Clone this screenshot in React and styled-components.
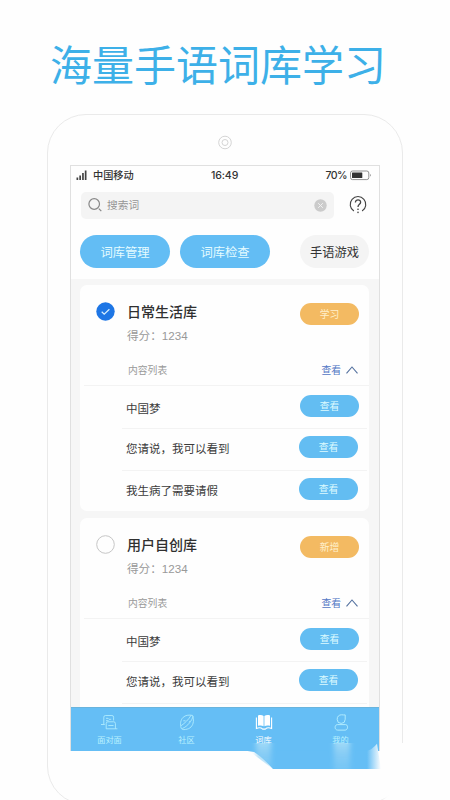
import React from "react";
import styled, { createGlobalStyle } from "styled-components";

const Global = createGlobalStyle`
  * { box-sizing: border-box; }
  body { margin: 0; background: #fefefe; }
`;

const Page = styled.main`
  position: relative;
  width: 450px;
  height: 800px;
  overflow: hidden;
  background: #fefefe;
  font-family: "Noto Sans CJK SC", "Noto Sans", sans-serif;
  color: #333;
`;

const Headline = styled.h1`
  margin: 0;
  height: 114px;
  padding: 33px 0 0 50px;
  font-size: 42px;
  line-height: 60px;
  font-weight: 400;
  color: #3db0e8;
  white-space: nowrap;
`;

const Phone = styled.section`
  width: 356px;
  height: 691px;
  margin-left: 47px;
  padding: 0 23px;
  border: 1px solid #eaeaea;
  border-radius: 39px;
`;

const Speaker = styled.div`
  height: 50px;
  padding: 20px 0 0 147px;
  svg { display: block; }
`;

const Screen = styled.div`
  width: 310px;
  height: 586px;
  display: flex;
  flex-direction: column;
  border: 1px solid #e0e0e0;
  border-bottom: 0;
  overflow: hidden;
  margin-left: -1px;
`;

const Header = styled.header`
  flex: none;
  height: 113px;
  background: #fefefe;
`;

const StatusBar = styled.div`
  display: grid;
  grid-template-columns: 17px 118px 1fr auto 20px;
  align-items: center;
  height: 18px;
  padding: 0 9px 0 5px;
  font-size: 10.2px;
  line-height: 16px;
  font-weight: 500;
  color: #333;
  svg { display: block; }
`;

const Latin = styled.span`
  font-family: Inter, "Noto Sans", sans-serif;
  font-size: 10.6px;
  line-height: 16px;
  font-weight: 500;
  letter-spacing: ${(p) => p.$spacing || "0"};
  margin: 1px 3px 0 0;
`;

const SearchRow = styled.div`
  display: flex;
  align-items: center;
  gap: 15px;
  height: 27px;
  margin: 8px 0 0 10px;
  > svg { margin-top: -3px; }
`;

const SearchBox = styled.div`
  display: flex;
  align-items: center;
  width: 253px;
  height: 27px;
  padding: 0 7px;
  border-radius: 5px;
  background: #f4f4f4;
  color: #969696;
  font-size: 10.7px;
  line-height: 16px;
  > svg:first-child { margin-top: -1px; }
  span { flex: 1; margin: -1px 0 0 4px; }
`;

const Actions = styled.div`
  display: flex;
  gap: 10px;
  margin: 16px 10px 0 9px;
`;

const ActionButton = styled.button`
  width: ${(p) => (p.$plain ? "69px" : "90px")};
  height: 33px;
  margin-left: ${(p) => (p.$plain ? "auto" : "0")};
  padding: 0;
  border: 0;
  border-radius: 17px;
  background: ${(p) => (p.$plain ? "#f4f4f4" : "#63bdf4")};
  color: ${(p) => (p.$plain ? "#333" : "#e4fbff")};
  font: 400 12.3px/30px "Noto Sans CJK SC", sans-serif;
`;

const Content = styled.div`
  flex: 1;
  min-height: 0;
  overflow: hidden;
  padding: 6px 10px 0 9px;
  background: #f6f6f6;
`;

const Card = styled.article`
  height: 226px;
  margin-bottom: 7px;
  border-radius: 7px;
  background: #fefefe;
`;

const CardTop = styled.div`
  display: grid;
  grid-template-columns: 47px 1fr 59px;
  height: 69px;
  padding: 17px 10px 0 16px;
  > svg { display: block; }
  > button { margin-top: 1px; }
`;

const CardTitle = styled.h2`
  margin: -2px 0 0 -16px;
  font-size: 14px;
  line-height: 22px;
  font-weight: 500;
  color: #303030;
`;

const Score = styled.p`
  margin: 5px 0 0 -16px;
  font-family: "Liberation Sans", "Noto Sans CJK SC", sans-serif;
  font-size: 11.6px;
  line-height: 18px;
  color: #999;
`;

const Pill = styled.button`
  flex: none;
  width: 59px;
  height: 22px;
  padding: 0;
  border: 0;
  border-radius: 11px;
  background: ${(p) => (p.$warm ? "#f3ba62" : "#63bdf2")};
  color: ${(p) => (p.$warm ? "#fff0cc" : "#dcfaff")};
  font: 400 9.8px/20px "Noto Sans CJK SC", sans-serif;
`;

const ListHeading = styled.div`
  display: flex;
  align-items: center;
  justify-content: space-between;
  height: 32px;
  margin-left: 4px;
  padding: 0 11px 0 44px;
  border-bottom: 1px solid #f3f3f3;
  font-size: 9.8px;
  line-height: 16px;
  color: #999;
`;

const Toggle = styled.span`
  display: flex;
  align-items: center;
  gap: 5px;
  color: #5276c4;
`;

const WordRow = styled.div`
  display: flex;
  justify-content: space-between;
  align-items: flex-start;
  height: ${(p) => (p.$first ? "43px" : p.$last ? "40px" : "42px")};
  margin: 0 2px 0 42px;
  padding: ${(p) => (p.$first ? "9px 8px 0 4px" : "7px 9px 0 4px")};
  border-bottom: ${(p) => (p.$last ? "0" : "1px solid #f3f3f3")};
  font-size: 11.5px;
  line-height: 18px;
  color: #3b3b3b;
  span { margin-top: ${(p) => (p.$first ? "4px" : "3px")}; }
`;

const NavBar = styled.nav`
  flex: none;
  display: grid;
  grid-template-columns: repeat(4, 1fr);
  height: 44px;
  border-top: 1px solid #69b4dd;
  background: #65bef5;
`;

const NavItem = styled.div`
  display: flex;
  flex-direction: column;
  align-items: center;
  padding-top: 6px;
  color: ${(p) => (p.$active ? "#fff" : "#b9f1ff")};
  font-size: 8.2px;
  line-height: 12px;
  span { margin-top: 2px; }
`;

const Smear = styled.svg`
  position: absolute;
  left: 230px;
  top: 735px;
`;

const SignalIcon = () => (
  <svg width="12" height="11" viewBox="0 0 12 11" fill="#444">
    <rect x="0.5" y="7.5" width="1.7" height="2.5" /><rect x="3.3" y="5.5" width="1.7" height="4.5" />
    <rect x="6.1" y="3" width="1.7" height="7" /><rect x="8.8" y="0.5" width="1.7" height="9.5" />
  </svg>
);
const BatteryIcon = () => (
  <svg width="22" height="11" viewBox="0 0 22 11" fill="none">
    <rect x="0.5" y="1" width="18.3" height="8.6" rx="2" stroke="#777" strokeWidth=".8" />
    <rect x="2" y="2.5" width="10.3" height="5.6" rx=".5" fill="#333" />
    <path d="M20 4v2.6c.8-.3.8-2.3 0-2.6z" fill="#666" />
  </svg>
);
const SearchIcon = () => (
  <svg width="15" height="16" viewBox="0 0 15 16" fill="none" stroke="#888" strokeWidth="1.2">
    <circle cx="6.2" cy="7" r="5.3" /><path d="m10.8 11.7 2.5 2.5" />
  </svg>
);
const ClearIcon = () => (
  <svg width="13" height="13" viewBox="0 0 13 13">
    <circle cx="6.5" cy="6.5" r="6.2" fill="#cbcbcb" /><path d="m4.2 4.2 4.6 4.6m0-4.6L4.2 8.8" stroke="#f1f1f1" />
  </svg>
);
const HelpIcon = () => (
  <svg width="18" height="19" viewBox="0 0 18 19" fill="none" stroke="#444" strokeWidth="1.1">
    <path d="M4.9 16a7.8 7.8 0 1 1 8.2 0" />
    <path d="M6.4 7.5c0-3.6 5.4-3.4 5.2-.1C11.5 9.3 9 9.4 9 12" strokeWidth="1.3" />
    <circle cx="9" cy="14.3" r=".8" fill="#333" stroke="none" />
    <circle cx="9" cy="17.4" r=".8" fill="#555" stroke="none" />
  </svg>
);
const CheckIcon = ({ checked }) => (
  <svg width="19" height="19" viewBox="0 0 19 19" fill="none">
    <circle cx="9.5" cy="9.5" r={checked ? 9.2 : 8.8} fill={checked ? "#1e76e5" : "#fefefe"} stroke={checked ? "none" : "#c6c6c6"} />
    {checked && <path d="m5.7 9.8 2.5 2.4 5.2-5" stroke="#d7efff" strokeWidth="1.2" />}
  </svg>
);
const CaretIcon = () => (
  <svg width="12" height="8" viewBox="0 0 12 8" fill="none" stroke="#54719f" strokeWidth="1.1"><path d="M.5 7.3 6 1l5.5 6.3" /></svg>
);

const ChatIcon = () => (
  <svg width="18" height="17" viewBox="0 0 18 17" fill="none" stroke="currentColor" strokeWidth=".8">
    <path d="M2.8 10V3.2q0-1.7 1.7-1.7h6.4q1.7 0 1.7 1.7v3.3M0 10.5h3.8M5 4.3h2l1 1h2.2M5 6.7h2.6" />
    <path d="M5.2 14.8V9.5q0-1.7 1.7-1.7h5.8q1.7 0 1.7 1.7v5.3zM7.3 11.5h5.2M14.4 14.8h2" />
  </svg>
);
const PlanetIcon = () => (
  <svg width="18" height="17" viewBox="0 0 18 17" fill="none" stroke="currentColor" strokeWidth=".8">
    <path d="M14.5 1.4C11 .7 7.3 1.2 5.2 3.3 2.4 6 2 10 3.2 14.4c1.4 1.8 3.6 1.2 6 .7 4.2-1 6.4-4.8 6.2-9.2-.1-2-.3-3.4-.9-4.5z" />
    <path d="M15 2.2c-.7 3.8-5.4 10.5-10.8 12.3M3.2 11.7C6.7 9.2 10.8 5.4 13 1.4M5.3 6.8h2.2M10.8 8l1-.8" />
  </svg>
);
const BookIcon = () => (
  <svg width="18" height="17" viewBox="0 0 18 17">
    <path d="M3 1.5c2.1-.7 4.2-.6 5.6.6v10.2C7 11.3 5 11.3 3 11.8zM15 1.5c-2.1-.7-4.2-.6-5.6.6v10.2c1.6-1 3.6-1 5.6-.5z" fill="#fff" />
    <path d="M1.4 3.5v11c2.4-1 4.7-.9 6.3.6h2.6c1.6-1.5 3.9-1.6 6.3-.6v-11" fill="none" stroke="#fff" strokeWidth="1.1" />
  </svg>
);
const PersonIcon = () => (
  <svg width="18" height="17" viewBox="0 0 18 17" fill="none" stroke="currentColor" strokeWidth=".9">
    <path d="M13.2.9v4.5a4 4 0 0 1-8 0C5 2.5 7.2.7 9.5.8c1.4.1 2.4.2 3.7.1z" />
    <path d="M5.5 10.6h8c3 0 2.6 5.5-.4 5.5H5.7c-3.4 0-3.4-5.5-.2-5.5z" />
  </svg>
);

const libraries = [
  { title: "日常生活库", action: "学习", checked: true, words: ["中国梦", "您请说，我可以看到", "我生病了需要请假"] },
  { title: "用户自创库", action: "新增", checked: false, words: ["中国梦", "您请说，我可以看到"] },
];
const tabs = [
  { label: "面对面", Icon: ChatIcon }, { label: "社区", Icon: PlanetIcon },
  { label: "词库", Icon: BookIcon, active: true }, { label: "我的", Icon: PersonIcon },
];

function LibraryCard({ library }) {
  return (
    <Card>
      <CardTop>
        <CheckIcon checked={library.checked} />
        <div><CardTitle>{library.title}</CardTitle><Score>得分：1234</Score></div>
        <Pill $warm>{library.action}</Pill>
      </CardTop>
      <ListHeading>内容列表<Toggle>查看<CaretIcon /></Toggle></ListHeading>
      {library.words.map((word, i) => (
        <WordRow key={word} $first={i === 0} $last={i === 2}>
          <span>{word}</span><Pill>查看</Pill>
        </WordRow>
      ))}
    </Card>
  );
}

export default function App() {
  return (
    <>
      <Global />
      <Page>
        <Headline>海量手语词库学习</Headline>
        <Phone>
          <Speaker>
            <svg width="14" height="15" viewBox="0 0 14 15" fill="none" stroke="#cfcfcf" strokeWidth=".9">
              <circle cx="7" cy="7.5" r="6.3" /><circle cx="7" cy="7.5" r="3" />
            </svg>
          </Speaker>
          <Screen>
            <Header>
              <StatusBar>
                <SignalIcon /><span>中国移动</span><Latin $spacing="-.15px">16:49</Latin><Latin $spacing="-.6px">70%</Latin><BatteryIcon />
              </StatusBar>
              <SearchRow>
                <SearchBox><SearchIcon /><span>搜索词</span><ClearIcon /></SearchBox>
                <HelpIcon />
              </SearchRow>
              <Actions>
                <ActionButton>词库管理</ActionButton>
                <ActionButton>词库检查</ActionButton>
                <ActionButton $plain>手语游戏</ActionButton>
              </Actions>
            </Header>
            <Content>
              {libraries.map((library) => <LibraryCard key={library.title} library={library} />)}
            </Content>
            <NavBar>
              {tabs.map(({ label, Icon, active }) => (
                <NavItem key={label} $active={active}><Icon /><span>{label}</span></NavItem>
              ))}
            </NavBar>
          </Screen>
        </Phone>
        <Smear width="220" height="65" viewBox="0 0 220 65">
          <defs>
            <filter id="soft" x="-50%" y="-20%" width="200%" height="140%"><feGaussianBlur stdDeviation="2.4 .5" /></filter>
            <linearGradient id="fade" x2="0" y2="1">
              <stop offset="0" stopColor="#a5dcf8" stopOpacity=".9" /><stop offset=".4" stopColor="#94d2f5" stopOpacity=".7" /><stop offset="1" stopColor="#8ed0f5" stopOpacity=".35" />
            </linearGradient>
            <linearGradient id="edge" x2="1" y2="0">
              <stop offset="0" stopColor="#65bef5" /><stop offset="1" stopColor="#fefefe" />
            </linearGradient>
            <clipPath id="spill"><path d="M19 7h128v27H43L19 16z" /></clipPath>
          </defs>
          <path d="M151 8h69v49h-69z" fill="#fefefe" />
          <path d="M16 15.8h122v18.2H43q-12-13-19-17z" fill="#65bef5" />
          <path d="M137 15.8q5-1 10-7l4 25.2h-14z" fill="url(#edge)" />
          <g clipPath="url(#spill)">
            <path d="M26 8h15v29H26z" fill="url(#fade)" filter="url(#soft)" />
            <path d="M104 8h16v29h-16z" fill="url(#fade)" filter="url(#soft)" />
          </g>
          <path d="M154 57h30v8h-30z" fill="#fefefe" filter="url(#soft)" />
        </Smear>
      </Page>
    </>
  );
}
